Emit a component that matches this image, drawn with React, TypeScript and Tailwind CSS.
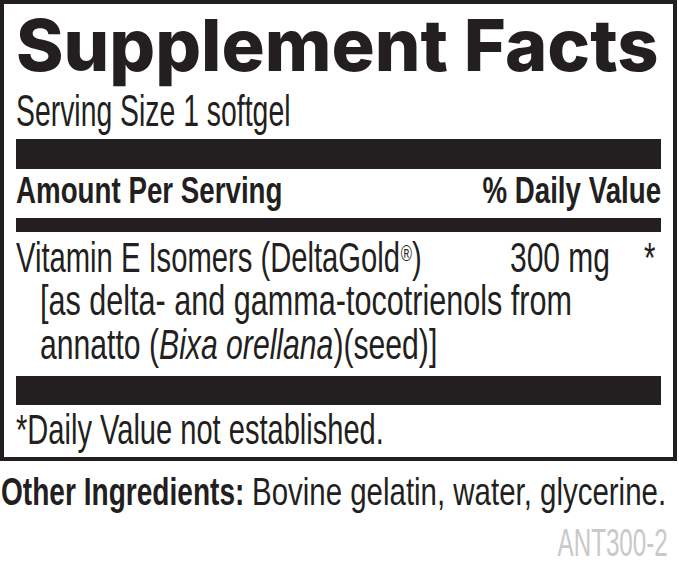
import React from "react";

// The label face is a condensed sans; Liberation Sans squeezed horizontally stands in for it.
const Squeeze = ({
  className,
  children,
}: {
  className: string;
  children: React.ReactNode;
}) => <span className={`inline-block whitespace-nowrap ${className}`}>{children}</span>;

const App = () => {
  return (
    <div className="w-[679px] h-[562px] bg-white overflow-hidden text-[#231f20] font-['Liberation_Sans',Arial,sans-serif]">
      {/* Label box */}
      <div className="w-[677px] border-4 border-[#231f20] px-3">
        <h1 className="h-[84px] text-[72px] leading-[82px] font-extrabold whitespace-nowrap font-['Inter','Liberation_Sans',sans-serif]">
          Supplement Facts
        </h1>

        <p className="h-[51px] text-[44px] leading-[45px]">
          <Squeeze className="origin-left scale-x-[0.645]">Serving Size 1 softgel</Squeeze>
        </p>

        <div className="h-[30px] bg-[#231f20]" />

        <div className="h-[49px] flex justify-between items-start font-bold text-[36px] leading-[43px]">
          <Squeeze className="origin-left scale-x-[0.77]">Amount Per Serving</Squeeze>
          <Squeeze className="origin-right scale-x-[0.77]">% Daily Value</Squeeze>
        </div>

        <div className="h-[14px] bg-[#231f20]" />

        <div className="h-[144px] pt-[5px] text-[42px]">
          <div className="flex leading-[42px]">
            <div className="w-[494px]">
              <Squeeze className="origin-left scale-x-[0.695]">
                Vitamin E Isomers (DeltaGold
                <sup className="text-[22px] relative top-[-11px] ml-[1px]">®</sup>)
              </Squeeze>
            </div>
            <div className="w-[100px]">
              <Squeeze className="origin-left scale-x-[0.714]">300 mg</Squeeze>
            </div>
            <div className="flex-1 flex justify-end pr-[6px]">
              <Squeeze className="origin-right scale-x-[0.7]">*</Squeeze>
            </div>
          </div>
          <div className="pl-[24px] leading-[44px]">
            <Squeeze className="origin-left scale-x-[0.728]">[as delta- and gamma-tocotrienols from</Squeeze>
          </div>
          <div className="pl-[24px] leading-[44px]">
            <Squeeze className="origin-left scale-x-[0.718]">
              annatto (<i>Bixa orellana</i>)(seed)]
            </Squeeze>
          </div>
        </div>

        <div className="h-[29px] bg-[#231f20]" />

        <p className="h-[52px] text-[42px] leading-[49px]">
          <Squeeze className="origin-left scale-x-[0.692]">*Daily Value not established.</Squeeze>
        </p>
      </div>

      <div className="h-[61px] pl-[1px] flex text-[39px] leading-[61px]">
        <div className="w-[251px] shrink-0">
          <Squeeze className="origin-left scale-x-[0.72] font-bold">Other Ingredients:</Squeeze>
        </div>
        <div className="shrink-0">
          <Squeeze className="origin-left scale-x-[0.755]">Bovine gelatin, water, glycerine.</Squeeze>
        </div>
      </div>

      <p className="h-[40px] pt-[2px] pr-[11px] text-right text-[39px] leading-[38px] text-[#c9c9c9]">
        <Squeeze className="origin-right scale-x-[0.62]">ANT300-2</Squeeze>
      </p>
    </div>
  );
};

export default App;
